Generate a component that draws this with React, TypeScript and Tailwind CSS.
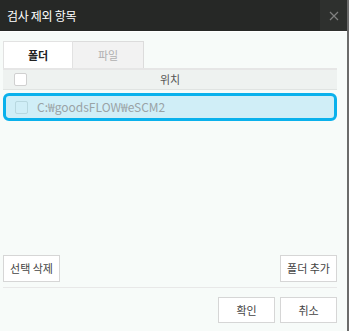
import React from 'react';

const font = { fontFamily: '"Noto Sans CJK KR", "Noto Sans", sans-serif' };

export default function App() {
  return (
    <div className="w-[349px] h-[331px] flex flex-col bg-[#f7fbf9] border-r-2 border-[#6b6b6b] overflow-hidden" style={font}>
      {/* Title bar */}
      <div className="h-[32px] shrink-0 flex items-center justify-between bg-[#262826] border-b border-white">
        <span className="pl-[7px] text-[12px] leading-none text-white tracking-[-0.3px]">검사 제외 항목</span>
        <button className="h-full w-[27px] flex items-center justify-center bg-[#2e302e]">
          <svg width="10" height="10" viewBox="0 0 10 10">
            <path d="M1 1 L9 9 M9 1 L1 9" stroke="#808080" strokeWidth="1.2" />
          </svg>
        </button>
      </div>

      <div className="flex-1 min-h-0 flex flex-col pl-[3px] pr-[10px] pt-[9px] pb-[8px]">
        {/* Tabs */}
        <div className="flex h-[27px] shrink-0">
          <div className="w-[70px] flex items-center justify-center bg-white border border-b-0 border-[#e2e2e2] text-[11px] leading-none font-bold text-[#222]">
            폴더
          </div>
          <div className="w-[71px] flex items-center justify-center bg-[#f2f2f2] border border-l-0 border-b-0 border-[#dcdcdc] text-[11px] leading-none text-[#b0b0b0]">
            파일
          </div>
        </div>

        {/* Table */}
        <div className="flex-1 min-h-0 flex flex-col border-t-2 border-[#e6e6e6]">
          <div className="h-[20px] shrink-0 flex items-center bg-[#eef2f0] border-b border-[#e0e4e2]">
            <div className="w-[34px] flex justify-center">
              <div className="w-[13px] h-[13px] bg-white border border-[#d0d0d0] rounded-[2px]" />
            </div>
            <div className="flex-1 text-center text-[11px] leading-none text-[#555] pr-[34px]">위치</div>
          </div>
          <div className="mt-[3px] h-[28px] shrink-0 flex items-center bg-[#d0eef7] border-[3px] border-[#0ab1ec] rounded-[6px]">
            <div className="w-[31px] flex justify-center">
              <div className="w-[13px] h-[13px] bg-[#d0eef7] border border-[#b8d8e0] rounded-[2px]" />
            </div>
            <span className="text-[12px] leading-none text-[#9aa3a6]">C:₩goodsFLOW₩eSCM2</span>
          </div>
        </div>

        {/* Action buttons */}
        <div className="h-[27px] shrink-0 flex justify-between">
          <button className="w-[57px] h-full bg-white border border-[#d6d6d6] text-[11px] leading-none text-[#444]">선택 삭제</button>
          <button className="w-[57px] h-full bg-white border border-[#d6d6d6] text-[11px] leading-none text-[#444]">폴더 추가</button>
        </div>

        <div className="mt-[5px] h-px shrink-0 bg-[#e8e8e8]" />

        <div className="mt-[9px] h-[26px] shrink-0 flex justify-end gap-[5px]">
          <button className="w-[57px] h-full bg-white border border-[#d6d6d6] text-[11px] leading-none text-[#444]">확인</button>
          <button className="w-[57px] h-full bg-white border border-[#d6d6d6] text-[11px] leading-none text-[#444]">취소</button>
        </div>
      </div>
    </div>
  );
}
